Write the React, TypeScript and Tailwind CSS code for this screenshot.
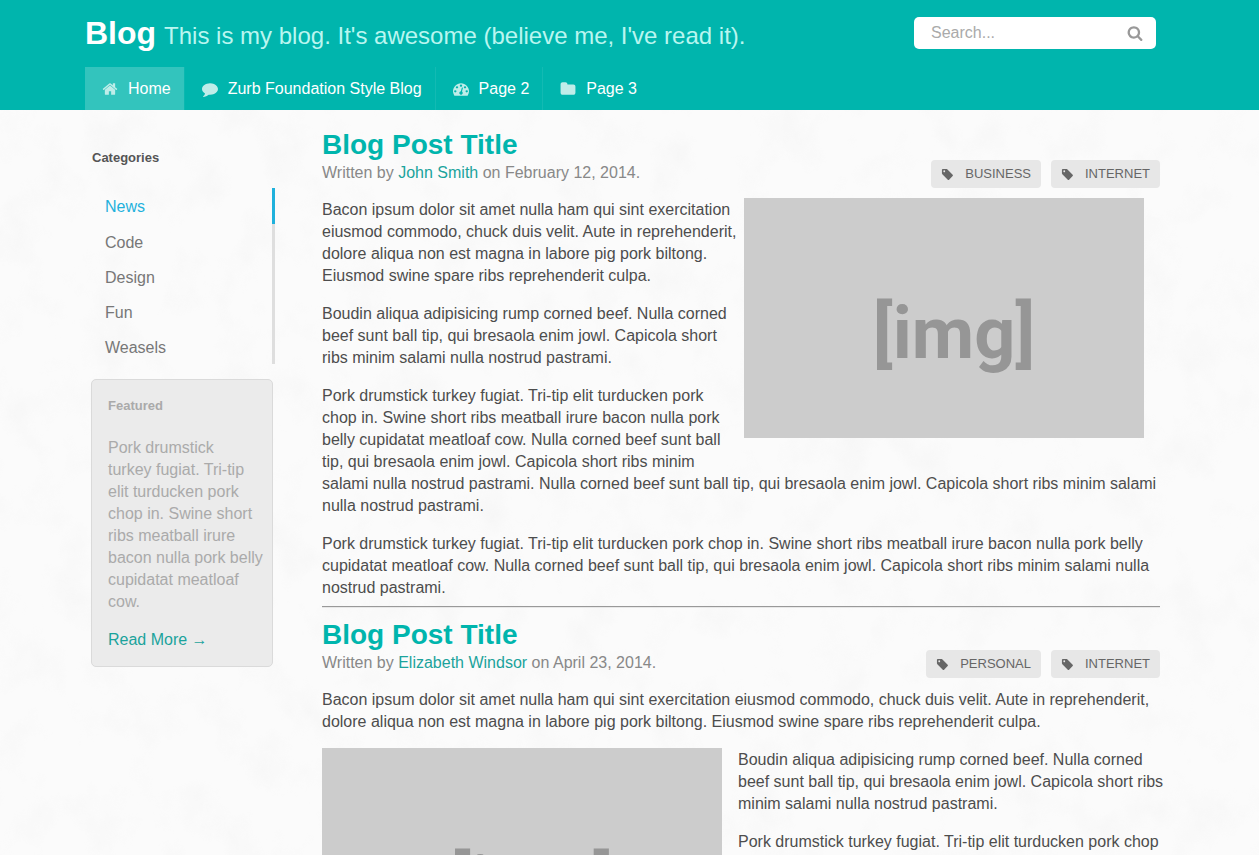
import type { ReactNode } from "react";

const ICONS = {
  home: "M1472 992v480q0 26-19 45t-45 19h-384v-384h-256v384h-384q-26 0-45-19t-19-45v-480q0-1 .5-3t.5-3l575-474 575 474q1 2 1 6zm223-69l-62 74q-8 9-21 11h-3q-13 0-21-7l-692-577-692 577q-12 8-24 7-13-2-21-11l-62-74q-8-10-7-23.5t11-21.5l719-599q32-26 76-26t76 26l244 204v-195q0-14 9-23t23-9h192q14 0 23 9t9 23v408l219 182q10 8 11 21.5t-7 23.5z",
  comment:
    "M1792 896q0 174-120 321.5t-326 233-450 85.5q-70 0-145-8-198 175-460 242-49 14-114 22-17 2-30.5-9t-17.5-29v-1q-3-4-.5-12t2-10 4.5-9.5l6-9 7-8.5 8-9q7-8 31-34.5t34.5-38 31-39.5 32.5-51 27-59 26-76q-157-89-247.5-220t-90.5-281q0-130 71-248.5t191-204.5 286-136.5 348-50.5q244 0 450 85.5t326 233 120 321.5z",
  dashboard:
    "M384 1152q0-53-37.5-90.5t-90.5-37.5-90.5 37.5-37.5 90.5 37.5 90.5 90.5 37.5 90.5-37.5 37.5-90.5zm192-448q0-53-37.5-90.5t-90.5-37.5-90.5 37.5-37.5 90.5 37.5 90.5 90.5 37.5 90.5-37.5 37.5-90.5zm428 481l101-382q6-26-7.5-48.5t-38.5-29.5-48 6.5-30 39.5l-101 382q-60 5-107 43.5t-63 98.5q-20 77 20 146t117 89 146-20 89-117q16-60-6-117t-72-91zm660-33q0-53-37.5-90.5t-90.5-37.5-90.5 37.5-37.5 90.5 37.5 90.5 90.5 37.5 90.5-37.5 37.5-90.5zm-640-640q0-53-37.5-90.5t-90.5-37.5-90.5 37.5-37.5 90.5 37.5 90.5 90.5 37.5 90.5-37.5 37.5-90.5zm448 192q0-53-37.5-90.5t-90.5-37.5-90.5 37.5-37.5 90.5 37.5 90.5 90.5 37.5 90.5-37.5 37.5-90.5zm320 448q0 261-141 483-19 29-54 29h-1402q-35 0-54-29-141-221-141-483 0-182 71-348t191-286 286-191 348-71 348 71 286 191 191 286 71 348z",
  folder:
    "M1728 608v704q0 92-66 158t-158 66h-1216q-92 0-158-66t-66-158v-960q0-92 66-158t158-66h320q92 0 158 66t66 158v32h672q92 0 158 66t66 158z",
  tag: "M576 448q0-53-37.5-90.5t-90.5-37.5-90.5 37.5-37.5 90.5 37.5 90.5 90.5 37.5 90.5-37.5 37.5-90.5zm1067 576q0 53-37 90l-491 492q-39 37-91 37-53 0-90-37l-715-716q-38-37-64.5-101t-26.5-117v-416q0-52 38-90t90-38h416q53 0 117 26.5t102 64.5l715 714q37 39 37 91z",
  search:
    "M1216 832q0-185-131.5-316.5t-316.5-131.5-316.5 131.5-131.5 316.5 131.5 316.5 316.5 131.5 316.5-131.5 131.5-316.5zm512 832q0 52-38 90t-90 38q-54 0-90-38l-343-342q-179 124-399 124-143 0-273.5-55.5t-225-150-150-225-55.5-273.5 55.5-273.5 150-225 225-150 273.5-55.5 273.5 55.5 225 150 150 225 55.5 273.5q0 220-124 399l343 343q37 37 37 90z",
};

type IconName = keyof typeof ICONS;

function Icon({ name, className }: { name: IconName; className: string }) {
  return (
    <svg viewBox="0 0 1792 1792" fill="currentColor" aria-hidden="true" className={className}>
      <path d={ICONS[name]} />
    </svg>
  );
}

const NAV: { label: string; icon: IconName; active?: boolean }[] = [
  { label: "Home", icon: "home", active: true },
  { label: "Zurb Foundation Style Blog", icon: "comment" },
  { label: "Page 2", icon: "dashboard" },
  { label: "Page 3", icon: "folder" },
];

const CATEGORIES = ["News", "Code", "Design", "Fun", "Weasels"];

function PaperTexture() {
  return (
    <svg aria-hidden="true" className="absolute inset-0 -z-10 h-full w-full">
      <filter id="paper" x="0" y="0" width="100%" height="100%">
        <feTurbulence type="fractalNoise" baseFrequency="0.023 0.019" numOctaves="7" seed="21" />
        <feColorMatrix values="0 0 0 0 0.7  0 0 0 0 0.7  0 0 0 0 0.7  2 0 0 0 -0.95" />
      </filter>
      <rect width="100%" height="100%" filter="url(#paper)" opacity="0.14" />
    </svg>
  );
}

function Header() {
  return (
    <header className="bg-[#00b5ad]">
      <div className="mx-auto max-w-[1089px]">
        <div className="flex h-[67px] items-start justify-between pr-[18px]">
          <h1 className="flex items-baseline gap-2 pt-[15px] text-[32px] leading-9 font-bold text-white">
            Blog
            <small className="text-2xl leading-9 font-normal text-[#b9f6f0]">
              This is my blog. It's awesome (believe me, I've read it).
            </small>
          </h1>
          <form role="search" className="mt-[17px] flex h-8 w-[242px] items-center rounded-[5px] bg-white pr-[13px] pl-[17px]">
            <input
              type="search"
              aria-label="Search"
              placeholder="Search..."
              className="min-w-0 flex-1 bg-transparent text-base text-[#555555] outline-none placeholder:text-[#aaaaaa]"
            />
            <button type="button" aria-label="Submit search" className="text-[#999999]">
              <Icon name="search" className="size-4" />
            </button>
          </form>
        </div>
        <nav className="flex h-[43px]">
          {NAV.map((item) => (
            <a
              key={item.label}
              href="#"
              className={
                item.active
                  ? "flex items-center gap-[9px] border-r border-[#0ab8b0] bg-[#33c4bd] pr-[13px] pl-4 text-white"
                  : "flex items-center gap-[9px] border-r border-[#13bab3] pr-[13px] pl-4 text-white last:border-r-0"
              }
            >
              <span className="flex w-[18px] justify-center text-[#bfede9]">
                <Icon name={item.icon} className="size-4" />
              </span>
              {item.label}
            </a>
          ))}
        </nav>
      </div>
    </header>
  );
}

function Sidebar() {
  return (
    <aside className="w-[190px] shrink-0 pt-[39px] pl-[6px]">
      <h2 className="pl-px text-[13px] leading-[18px] font-bold text-[#555555]">Categories</h2>
      <ul className="mt-[21px] border-r-[3px] border-[#dedede]">
        {CATEGORIES.map((name, i) => (
          <li key={name}>
            <a
              href="#"
              className={
                i === 0
                  ? "-mr-[3px] flex h-9 items-center border-r-[3px] border-[#1fb1dc] pt-0.5 pl-[14px] text-[#1fb1dc]"
                  : "flex h-[35px] items-center pt-0.5 pl-[14px] text-[#777777]"
              }
            >
              {name}
            </a>
          </li>
        ))}
      </ul>
      <section className="mt-[15px] mr-0.5 rounded-[5px] border border-[#dadada] bg-[#ebebeb] px-4 pt-[17px] pb-[15px] leading-[22px] text-[#aaaaaa]">
        <h3 className="text-[13px] leading-[18px] font-bold">Featured</h3>
        <p className="mt-[22px] -mr-2">
          Pork drumstick
          <br />
          turkey fugiat. Tri-tip elit turducken pork chop in. Swine short ribs meatball irure bacon nulla pork belly
          cupidatat meatloaf cow.
        </p>
        <a href="#" className="mt-4 block text-[#1ba39c]">
          Read More →
        </a>
      </section>
    </aside>
  );
}

function Placeholder({ side }: { side: "left" | "right" }) {
  return (
    <div
      role="img"
      aria-label="Placeholder"
      className={
        side === "right"
          ? "float-right -mt-px mr-5 mb-4 ml-[6px] flex h-60 w-[400px] items-center justify-center bg-[#cccccc] pt-8 pl-5 font-['Roboto',sans-serif] text-[72px] font-bold text-[#969696]"
          : "float-left -mt-px mr-4 mb-4 flex h-60 w-[400px] items-center justify-center bg-[#cccccc] pt-8 pl-5 font-['Roboto',sans-serif] text-[72px] font-bold text-[#969696]"
      }
    >
      [img]
    </div>
  );
}

function Post({ author, date, tags, children }: { author: string; date: string; tags: string[]; children: ReactNode }) {
  return (
    <article className="flow-root">
      <header className="mb-[11px] flex h-[60px] justify-between">
        <div>
          <h2 className="text-[28px] leading-[34px] font-bold text-[#00b5ad]">Blog Post Title</h2>
          <p className="leading-[22px] text-[#888888]">
            Written by{" "}
            <a href="#" className="text-[#1ba39c]">
              {author}
            </a>{" "}
            on {date}.
          </p>
        </div>
        <ul className="flex gap-[10px] self-end">
          {tags.map((tag) => (
            <li key={tag}>
              <a
                href="#"
                className="flex h-7 items-center gap-[11px] rounded bg-[#e7e7e7] px-[10px] text-[13px] text-[#666666] uppercase"
              >
                <Icon name="tag" className="size-[13px]" />
                {tag}
              </a>
            </li>
          ))}
        </ul>
      </header>
      <div className="-mr-1 leading-[22px] text-[#4d4d4d]">{children}</div>
    </article>
  );
}

export default function App() {
  return (
    <div className="relative isolate min-h-screen bg-[#fbfbfb] font-['Liberation_Sans',Arial,sans-serif] text-base">
      <PaperTexture />
      <Header />
      <div className="mx-auto flex max-w-[1089px] items-start pr-[14px]">
        <Sidebar />
        <main className="min-w-0 flex-1 pt-[18px] pl-[47px]">
          <Post author="John Smith" date="February 12, 2014" tags={["Business", "Internet"]}>
            <Placeholder side="right" />
            <p className="mb-4">
              Bacon ipsum dolor sit amet nulla ham qui sint exercitation eiusmod commodo, chuck duis velit. Aute in
              reprehenderit, dolore aliqua non est magna in labore pig pork biltong. Eiusmod swine spare ribs
              reprehenderit culpa.
            </p>
            <p className="mb-4">
              Boudin aliqua adipisicing rump corned beef. Nulla corned beef sunt ball tip, qui bresaola enim jowl.
              Capicola short ribs minim salami nulla nostrud pastrami.
            </p>
            <p className="mb-4">
              Pork drumstick turkey fugiat. Tri-tip elit turducken pork chop in. Swine short ribs meatball irure bacon
              nulla pork belly cupidatat meatloaf cow. Nulla corned beef sunt ball tip, qui bresaola enim jowl. Capicola
              short ribs minim salami nulla nostrud pastrami. Nulla corned beef sunt ball tip, qui bresaola enim jowl.
              Capicola short ribs minim salami nulla nostrud pastrami.
            </p>
            <p>
              Pork drumstick turkey fugiat. Tri-tip elit turducken pork chop in. Swine short ribs meatball irure bacon
              nulla pork belly cupidatat meatloaf cow. Nulla corned beef sunt ball tip, qui bresaola enim jowl. Capicola
              short ribs minim salami nulla nostrud pastrami.
            </p>
          </Post>
          <hr className="mt-[7px] mb-[10px] h-0.5 border-t border-b border-t-[#999999] border-b-[#e8e8e8]" />
          <Post author="Elizabeth Windsor" date="April 23, 2014" tags={["Personal", "Internet"]}>
            <p className="mb-4">
              Bacon ipsum dolor sit amet nulla ham qui sint exercitation eiusmod commodo, chuck duis velit. Aute in
              reprehenderit, dolore aliqua non est magna in labore pig pork biltong. Eiusmod swine spare ribs
              reprehenderit culpa.
            </p>
            <Placeholder side="left" />
            <p className="mb-4">
              Boudin aliqua adipisicing rump corned beef. Nulla corned beef sunt ball tip, qui bresaola enim jowl.
              Capicola short ribs minim salami nulla nostrud pastrami.
            </p>
            <p className="mb-4">
              Pork drumstick turkey fugiat. Tri-tip elit turducken pork chop in. Swine short ribs meatball irure bacon
              nulla pork belly cupidatat meatloaf cow.
            </p>
          </Post>
        </main>
      </div>
    </div>
  );
}
